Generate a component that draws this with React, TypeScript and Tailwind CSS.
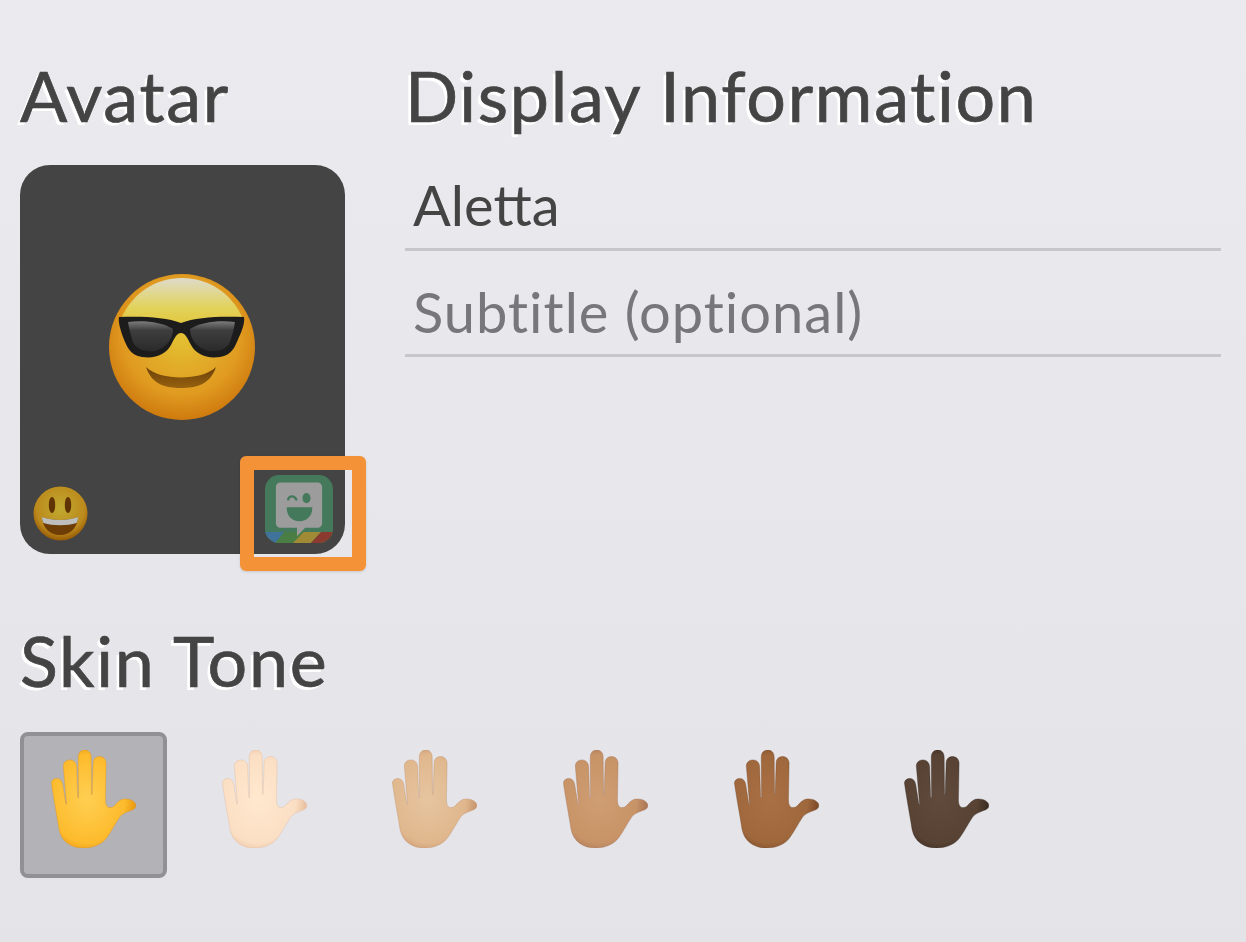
const tones = [
  { id: "y", a: "#FFCF52", b: "#FDBB2D", e: "#E48E08" },
  { id: "l", a: "#FFE8CE", b: "#FBDFC4", e: "#E3B592" },
  { id: "m", a: "#E6C5A0", b: "#E0B78D", e: "#C08A62" },
  { id: "n", a: "#CF9E73", b: "#C79367", e: "#A26C50" },
  { id: "d", a: "#A97044", b: "#9F673C", e: "#70401F" },
  { id: "k", a: "#5F4A3B", b: "#574233", e: "#33241B" },
];

function Hand({ t }: { t: (typeof tones)[number] }) {
  return (
    <svg width="85" height="98" viewBox="0 0 256 296" className="block">
      <defs>
        <radialGradient id={`h-${t.id}`} cx="0.42" cy="0.5" r="0.62">
          <stop offset="0" stopColor={t.a} />
          <stop offset="0.72" stopColor={t.b} />
          <stop offset="1" stopColor={t.e} />
        </radialGradient>
      </defs>
      <path
        d="M1 100C1 92 8 86 17 86C26 86 33 92 35 104L44 160C44.5 166 47 166 46.5 160L37 50C36 38 45 30 57 30C68 30 76 38 77 50L80 140C80.5 147 83 147 83 140L82 22C82 8 90 0 101.5 0C113 0 121 8 121 22L122 130C122 137 124 137 124 130L127 38C128 26 136 20 146.5 20C157 20 166 28 166 40L164 150C164 170 172 178 186 172C196 167 202 149 222 148C240 147 256 156 256 168C256 176 250 180 240 183C226 189 214 192 206 204C194 222 184 242 170 262C156 284 128 296 98 296C62 296 32 278 24 240C18 200 8 150 1 100Z"
        fill={`url(#h-${t.id})`}
        stroke={t.e}
        strokeOpacity="0.55"
        strokeWidth="2"
      />
    </svg>
  );
}

function CoolFace() {
  return (
    <svg width="148" height="148" viewBox="0 0 148 148" className="block">
      <defs>
        <radialGradient id="cool-base" cx="0.5" cy="0.42" r="0.58">
          <stop offset="0" stopColor="#E3C233" />
          <stop offset="0.7" stopColor="#E09A20" />
          <stop offset="1" stopColor="#CE7A0E" />
        </radialGradient>
        <linearGradient id="cool-top" x1="0" y1="0" x2="0" y2="1">
          <stop offset="0" stopColor="#DEDBCB" />
          <stop offset="0.55" stopColor="#E2D35C" />
          <stop offset="1" stopColor="#E3C233" />
        </linearGradient>
        <linearGradient id="cool-lens" x1="0" y1="0" x2="0" y2="1">
          <stop offset="0" stopColor="#7C7C7C" />
          <stop offset="0.3" stopColor="#3E3E3E" />
          <stop offset="1" stopColor="#2A2A2A" />
        </linearGradient>
        <linearGradient id="cool-mouth" x1="0" y1="0" x2="0" y2="1">
          <stop offset="0" stopColor="#6B3F08" />
          <stop offset="1" stopColor="#96610F" />
        </linearGradient>
      </defs>
      <circle cx="74" cy="74" r="73" fill="url(#cool-base)" />
      <path d="M13 46C24 20 48 5 74 5C100 5 124 20 135 46C124 62 24 62 13 46Z" fill="url(#cool-top)" />
      <path
        d="M11 44C34 43 58 44 73 50C88 44 112 43 136 44C137 50 134 58 131 64C127 74 124 82 112 84C98 86 88 81 83 72C79 64 77 60 73 60C69 60 67 64 63 72C58 81 48 86 34 84C22 82 19 74 15 64C13 58 10 50 11 44Z"
        fill="#1C1C1C"
      />
      <path d="M20 49C36 47 54 49 65 56C65 66 58 75 47 78C36 79 28 76 25 69C23 63 21 56 20 49Z" fill="url(#cool-lens)" />
      <path d="M127 49C111 47 93 49 82 56C82 66 89 75 100 78C111 79 119 76 122 69C124 63 126 56 127 49Z" fill="url(#cool-lens)" />
      <path d="M38 94C52 108 94 108 108 94C102 112 88 115 73 115C58 115 44 112 38 94Z" fill="url(#cool-mouth)" />
    </svg>
  );
}

function SmileFace() {
  return (
    <svg width="55" height="55" viewBox="0 0 55 55" className="block">
      <defs>
        <radialGradient id="smile-base" cx="0.5" cy="0.4" r="0.6">
          <stop offset="0" stopColor="#C0AA30" />
          <stop offset="0.75" stopColor="#BC8A1C" />
          <stop offset="1" stopColor="#975A06" />
        </radialGradient>
      </defs>
      <circle cx="27.5" cy="27.5" r="27" fill="url(#smile-base)" />
      <ellipse cx="19" cy="19" rx="3.2" ry="8" fill="#5F3304" />
      <ellipse cx="35" cy="19" rx="3.2" ry="8" fill="#5F3304" />
      <path d="M9 31C20 35 34 35 45 31C44.5 42 37 49 27 49C17 49 9.5 42 9 31Z" fill="#6E3D06" />
      <path d="M9 31C20 35 34 35 45 31C45 33.5 44.5 35.5 43.5 37C34 40 20 40 10.5 37C9.5 35.5 9 33.5 9 31Z" fill="#BEBEBE" />
    </svg>
  );
}

function AppIcon() {
  return (
    <svg width="68" height="68" viewBox="0 0 200 200" className="block">
      <defs>
        <clipPath id="icon-clip">
          <rect width="200" height="200" rx="42" />
        </clipPath>
      </defs>
      <g clipPath="url(#icon-clip)">
        <rect width="200" height="200" fill="#447A5B" />
        <rect y="168" width="200" height="32" fill="#4A7E45" />
        <path d="M0 168H56L30 200H0Z" fill="#3F739C" />
        <path d="M114 168H165L135 200H82Z" fill="#A08A35" />
        <path d="M165 168H200V180L182 200H135Z" fill="#8A3A2E" />
      </g>
      <path
        d="M46 22H154C162 22 168 28 168 36V141C168 149 162 155 154 155H118L94 180V155H46C38 155 32 149 32 141V36C32 28 38 22 46 22Z"
        fill="#9C9C9C"
      />
      <path d="M68 72C72 60 86 60 92 72" stroke="#447A5B" strokeWidth="7" fill="none" strokeLinecap="round" />
      <ellipse cx="122" cy="68" rx="12" ry="15" fill="#447A5B" />
      <path d="M64 95H139C140 120 124 136 101 136C78 136 63 120 64 95Z" fill="#447A5B" />
    </svg>
  );
}

export default function App() {
  return (
    <div className="flex h-[942px] w-[1246px] gap-[60px] overflow-hidden bg-gradient-to-b from-[#EBEBEF] to-[#E3E3E8] px-5 font-['Lato',sans-serif]">
      <div className="flex w-[325px] shrink-0 flex-col">
        <h2 className="mt-[54px] h-[82px] w-[400px] text-[70px] leading-[82px] font-normal tracking-[1.7px] text-[#444444] [-webkit-text-stroke:0.7px_#444444] [font-variant-ligatures:none] [text-shadow:-3px_3px_0_#ffffff]">
          Avatar
        </h2>
        <div className="relative mt-[29px] h-[389px] rounded-[30px] bg-[#444444]">
          <div className="flex justify-center pt-[108px] pr-[1px]">
            <CoolFace />
          </div>
          <div className="absolute bottom-[13px] left-[13px]">
            <SmileFace />
          </div>
          <div className="absolute bottom-[11px] right-[12px]">
            <AppIcon />
          </div>
          <div className="absolute bottom-[-17px] right-[-21px] h-[115px] w-[126px] rounded-[6px] border-[14px] border-[#F39237] shadow-sm" />
        </div>
        <h2 className="mt-[65px] h-[82px] w-[500px] text-[70px] leading-[82px] font-normal tracking-[1.7px] text-[#444444] [-webkit-text-stroke:0.7px_#444444] [font-variant-ligatures:none] [text-shadow:-3px_3px_0_#ffffff]">
          Skin Tone
        </h2>
        <div className="mt-[31px] flex w-[1000px] gap-6">
          {tones.map((t, i) => (
            <div
              key={t.id}
              className={
                i === 0
                  ? "flex h-[146px] w-[147px] justify-center rounded-lg border-4 border-[#909095] bg-[#B3B3B7] pt-[14px]"
                  : "flex h-[146px] w-[147px] justify-center rounded-lg border-4 border-transparent pt-[14px]"
              }
            >
              <Hand t={t} />
            </div>
          ))}
        </div>
      </div>
      <div className="flex-1 pr-[5px]">
        <h2 className="mt-[54px] h-[82px] text-[70px] leading-[82px] font-normal tracking-[1.7px] text-[#444444] [-webkit-text-stroke:0.7px_#444444] [font-variant-ligatures:none] [text-shadow:-3px_3px_0_#ffffff]">
          Display Information
        </h2>
        <div className="mt-[51px] flex h-[36px] items-center px-2 text-[56px] leading-[36px] text-[#444444]">Aletta</div>
        <div className="mt-[25px] h-[3px] bg-[#C6C6CB]" />
        <div className="mt-[43px] flex h-[36px] items-center px-2 text-[56px] leading-[36px] tracking-[1px] text-[#77777B] [font-variant-ligatures:none]">
          Subtitle (optional)
        </div>
        <div className="mt-[24px] h-[3px] bg-[#C6C6CB]" />
      </div>
    </div>
  );
}
